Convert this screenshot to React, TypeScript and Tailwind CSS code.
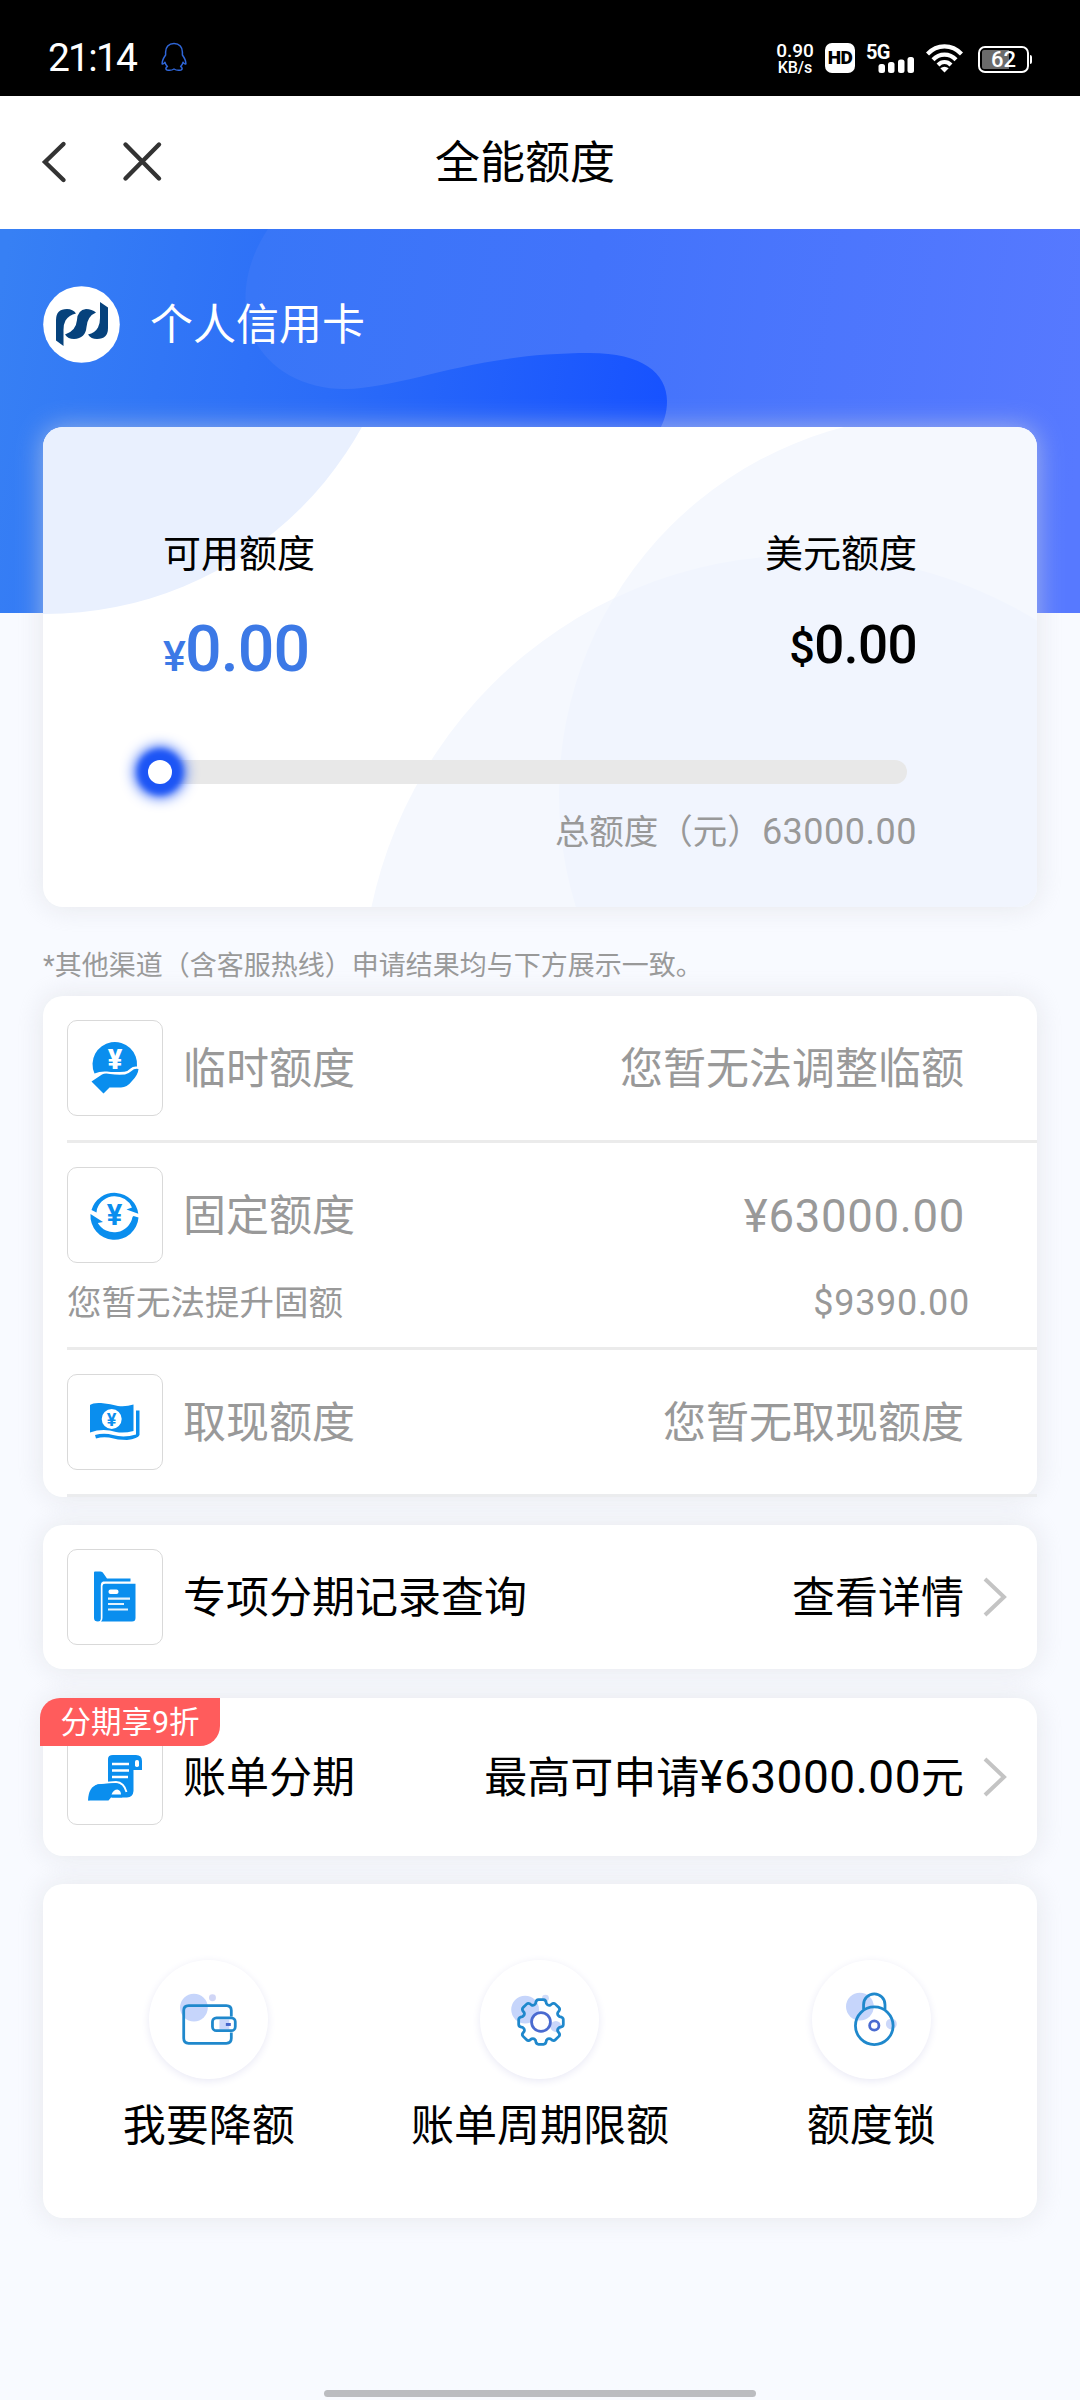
import React from "react";

// Shared chrome
const cardClass = "bg-white rounded-[20px] shadow-[0_0_27px_#d8dade99]";
const BLUE = "#0a8eee";

const App = () => {
  return (
    <div className="w-[1080px] h-[2400px] bg-[#f8faff] flex flex-col overflow-hidden text-black font-['Roboto','Noto_Sans_CJK_SC',sans-serif]">
      <StatusBar />

      {/* Title bar */}
      <header className="h-[133px] shrink-0 bg-white flex items-center relative z-10">
        <svg width="150" height="60" viewBox="0 0 150 60" className="ml-[30px]" fill="none" stroke="#333" strokeWidth="4.4" strokeLinecap="round" strokeLinejoin="miter">
          <path d="M33.5 11 L15 29 L33.5 47" />
          <path d="M95.5 11.5 L129 45.5 M129 11.5 L95.5 45.5" />
        </svg>
        <h1 className="ml-[255px] pt-[3px] text-[45px] leading-[60px]">全能额度</h1>
      </header>

      {/* Blue hero */}
      <section className="h-[384px] shrink-0 relative">
        <HeroBackground />
        <div className="relative flex items-center gap-[30px] pl-[43px] pt-[57px]">
          <BankLogo />
          <span className="text-[43px] leading-[60px] text-white">个人信用卡</span>
        </div>
      </section>

      <main className="px-[43px] -mt-[186px] relative flex flex-col">
        <BalanceCard />

        <p className="mt-[39px] h-[40px] text-[27px] leading-[40px] text-[#999] whitespace-nowrap">
          *其他渠道（含客服热线）申请结果均与下方展示一致。
        </p>

        {/* Limits */}
        <section className={`${cardClass} mt-[10px] h-[501px] pl-6 overflow-visible text-[#999]`}>
          <LimitRow icon={<HandCoinIcon />} label="临时额度" value="您暂无法调整临额" />
          <div className="h-[3px] bg-[#ebebeb]" />
          <div className="h-[204px]">
            <LimitRow icon={<CycleIcon />} label="固定额度" value="¥63000.00" numeric />
            <div className="flex justify-between items-center pr-[67px] -mt-[8px] text-[34.5px] leading-[48px]">
              <span>您暂无法提升固额</span>
              <span className="text-[36px] tracking-[0.7px]">$9390.00</span>
            </div>
          </div>
          <div className="h-[3px] bg-[#ebebeb]" />
          <LimitRow icon={<CashIcon />} label="取现额度" value="您暂无取现额度" />
          <div className="h-[3px] bg-[#ebecee]" />
        </section>

        {/* Instalment records */}
        <section className={`${cardClass} mt-7 h-[144px] pl-6`}>
          <LimitRow icon={<FolderIcon />} label="专项分期记录查询" value="查看详情" arrow />
        </section>

        {/* Bill instalments */}
        <section className={`${cardClass} mt-[29px] h-[158px] pl-6 pt-[7px] relative`}>
          <LimitRow
            icon={<ScrollIcon />}
            label="账单分期"
            value={
              <>
                最高可申请<span className="text-[46px] leading-none tracking-[0.5px]">¥63000.00</span>元
              </>
            }
            arrow
          />
          <span className="absolute -left-[3px] top-0 w-[180px] h-[48px] bg-[#ff5c5c] rounded-tl-[20px] rounded-br-[20px] text-white text-[30.5px] leading-[49px] text-center">
            分期享9折
          </span>
        </section>

        {/* Shortcuts */}
        <section className={`${cardClass} mt-[28px] h-[334px] grid grid-cols-3 pt-[76px]`}>
          <Shortcut icon={<WalletIcon />} label="我要降额" />
          <Shortcut icon={<GearIcon />} label="账单周期限额" />
          <Shortcut icon={<LockIcon />} label="额度锁" />
        </section>
      </main>

      {/* Gesture bar */}
      <div className="mt-auto mb-[3px] mx-auto w-[432px] h-[7px] rounded-full bg-[#bbbcc0]" />
    </div>
  );
};

const StatusBar = () => (
  <div className="h-[96px] shrink-0 bg-black text-white flex items-start pl-[48px] pr-[48px] pt-[42px]">
    <span className="w-[91px] text-[39px] leading-[33px] tracking-[-1.8px]">21:14</span>
    <svg width="26" height="30" viewBox="0 0 26 30" className="ml-[22px]" fill="none" stroke="#2f66d8" strokeWidth="1.5" strokeLinejoin="round">
      <path d="M13 1.5 C7.5 1.5 4.6 5.5 4.6 10 V13 C2.5 16 0.8 19 1.2 22 C2 22.5 3 21.5 4 20.3 C4.4 22 5.2 23.4 6.4 24.5 C4.6 25.4 4.4 27.5 6 28 C8.5 28.6 11.2 28.2 13 27 C14.8 28.2 17.5 28.6 20 28 C21.6 27.5 21.4 25.4 19.6 24.5 C20.8 23.4 21.6 22 22 20.3 C23 21.5 24 22.5 24.8 22 C25.2 19 23.5 16 21.4 13 V10 C21.4 5.5 18.5 1.5 13 1.5Z" />
    </svg>

    <div className="ml-auto flex items-start">
      <div className="w-[38px] text-center font-medium pt-[1px]">
        <div className="text-[19px] leading-[16px]">0.90</div>
        <div className="text-[16px] leading-[18px]">KB/s</div>
      </div>
      <div className="ml-[11px] mt-px w-[30px] h-[30px] rounded-[7px] bg-white text-black text-[19px] leading-[30px] font-black text-center tracking-[-0.5px]">
        HD
      </div>
      <div className="ml-[11px] w-[49px] h-[32px] relative">
        <span className="absolute left-0 top-0 text-[20px] leading-[20px] font-bold tracking-[-0.8px]">5G</span>
        <svg width="49" height="32" viewBox="0 0 49 32" fill="#fff">
          <rect x="12.5" y="22" width="6.5" height="9" rx="2.5" />
          <rect x="22" y="20" width="6.5" height="11" rx="2.5" />
          <rect x="32" y="17.5" width="6.5" height="13.5" rx="2.5" />
          <rect x="41.5" y="15" width="6.5" height="16" rx="2.5" />
        </svg>
      </div>
      <svg width="37" height="30" viewBox="0 0 37 30" className="ml-[11px] mt-[1px]" fill="none" stroke="#fff" strokeWidth="4.2">
        <path d="M1.5 11 C11 0.8 26 0.8 35.5 11" />
        <path d="M7 16.8 C13.5 10 23.5 10 30 16.8" />
        <path d="M12 22 C16 18.2 21 18.2 25 22" />
        <path d="M14.3 25.3 Q18.5 22.2 22.7 25.3 L18.5 29.6Z" fill="#fff" stroke="none" />
      </svg>
      <div className="ml-[15px] mt-[4px] flex items-center">
        <div className="w-[51px] h-[27px] rounded-[7px] border-[2.5px] border-white p-[2px] relative">
          <div className="w-[27px] h-full bg-[#6b6b6b] rounded-l-[2px]" />
          <span className="absolute inset-0 text-[22px] leading-[24px] font-medium text-center">62</span>
        </div>
        <div className="ml-px w-[2px] h-[9px] rounded-r bg-white" />
      </div>
    </div>
  </div>
);

const HeroBackground = () => (
  <svg width="1080" height="384" viewBox="0 0 1080 384" className="absolute inset-0">
    <defs>
      <linearGradient id="heroBase" gradientUnits="userSpaceOnUse" x1="0" y1="60" x2="670" y2="170">
        <stop offset="0" stopColor="#3780f4" />
        <stop offset="0.5" stopColor="#2b6cf8" />
        <stop offset="1" stopColor="#1752ff" />
      </linearGradient>
      <linearGradient id="heroWave" gradientUnits="userSpaceOnUse" x1="245" y1="100" x2="1080" y2="220">
        <stop offset="0" stopColor="#3876f7" />
        <stop offset="0.4" stopColor="#4273fb" />
        <stop offset="1" stopColor="#5779ff" />
      </linearGradient>
    </defs>
    <rect width="1080" height="384" fill="url(#heroBase)" />
    <path d="M268 0 C248 30 244 58 246 80 C250 128 292 160 345 160 C410 158 470 124 590 124 C642 124 667 144 667 172 C667 184 664 192 660 200 L640 384 H1080 V0Z" fill="url(#heroWave)" />
  </svg>
);

const BankLogo = () => (
  <svg width="77" height="77" viewBox="0 0 77 77">
    <circle cx="38.5" cy="38.5" r="38.3" fill="#fff" />
    <g fill="#06427c">
      <path d="M13 34 Q13 23 24 23 Q30 23 33 27.5 Q26 29 22.5 34.5 Q20.5 38 20.5 44 V60 L13 54.5Z" />
      <path d="M53 26.5 Q49 23 43 23 Q34.5 24 34 34 Q33 45 22 48.5 Q25 53 31 53 Q42.5 52.5 43.5 41 Q44.5 30 53 26.5Z" />
      <path d="M65 42 Q65 53 54 53 Q48 53 45 48.5 Q52 47 55 41.5 Q57 38 57 32 V16 L65 21.5Z" />
    </g>
  </svg>
);

const BalanceCard = () => (
  <section className={`${cardClass} h-[480px] relative`}>
    <svg width="994" height="480" viewBox="43 427 994 480" className="absolute inset-0 rounded-[20px]">
      <clipPath id="rightDisc">
        <circle cx="939" cy="795" r="380" />
      </clipPath>
      <circle cx="45" cy="252" r="362" fill="#e9f0fe" />
      <circle cx="939" cy="795" r="380" fill="#f5f8fe" />
      <circle cx="805" cy="998" r="443" fill="#f5f8fe" />
      <circle cx="805" cy="998" r="443" fill="#f1f5fe" clipPath="url(#rightDisc)" />
    </svg>
    <div className="relative pl-[120px] pr-[120px] pt-[99px]">
      <div className="flex justify-between text-[38px] leading-[56px]">
        <span>可用额度</span>
        <span>美元额度</span>
      </div>
      <div className="flex justify-between mt-[31px] h-[72px]">
        <span className="text-[#3c79e6] font-medium leading-[72px] text-[64.5px] tracking-[-0.9px]">
          <span className="text-[43px]">¥</span>0.00
        </span>
        <span className="font-medium leading-[64px] text-[53px] tracking-[-0.6px]">
          <span className="text-[45px]">$</span>0.00
        </span>
      </div>

      {/* Usage slider, sits at zero */}
      <div className="mt-[75px] -ml-1 w-[748px] h-6 rounded-full bg-[#e8e8e8] relative">
        <span className="absolute -left-[11px] top-0 w-6 h-6 rounded-full bg-white shadow-[0_0_14px_13px_#1d55f5,0_0_6px_10px_#1d55f5]" />
      </div>
      <div className="mt-[23px] flex justify-end items-center text-[34.5px] leading-[50px] text-[#999]">
        <span>总额度（元）</span>
        <span className="text-[36px] tracking-[0.5px]">63000.00</span>
      </div>
    </div>
  </section>
);

type RowProps = {
  icon: React.ReactNode;
  label: string;
  value: React.ReactNode;
  numeric?: boolean;
  arrow?: boolean;
};

const LimitRow = ({ icon, label, value, numeric, arrow }: RowProps) => (
  <div className="h-[144px] flex items-center text-[43px] leading-[60px]">
    <div className="w-[96px] h-[96px] shrink-0 rounded-[10px] border border-[#d9d9d9] bg-white">{icon}</div>
    <span className="ml-5 pt-[2px] whitespace-nowrap">{label}</span>
    <span className={numeric ? "ml-auto mr-[72px] pt-[3px] text-[45.5px] tracking-[0.7px]" : "ml-auto mr-[73px] pt-[2px] text-[43px]"}>{value}</span>
    {arrow && (
      <svg width="28" height="44" viewBox="0 0 28 44" className="-ml-[56px] mr-[28px] shrink-0" fill="none" stroke="#c4c4c4" strokeWidth="4">
        <path d="M4 4 L23 22 L4 40" />
      </svg>
    )}
  </div>
);

const Shortcut = ({ icon, label }: { icon: React.ReactNode; label: string }) => (
  <div className="flex flex-col items-center">
    <div className="w-[119px] h-[119px] rounded-full bg-white shadow-[0_2px_8px_#e9e9f5]">{icon}</div>
    <span className="mt-[17px] text-[43px] leading-[60px] whitespace-nowrap">{label}</span>
  </div>
);

// Row icons, drawn on the 96px tile
const Tile = ({ children }: { children: React.ReactNode }) => (
  <svg width="94" height="94" viewBox="1 1 94 94" fill={BLUE}>
    {children}
  </svg>
);

const HandCoinIcon = () => (
  <Tile>
    <path d="M27.5 53.5 A22.3 22.3 0 1 1 70 46.5 Q66 46 63.5 48.5 Q60 52 57 51.8 Q46 52.5 40 51.5 Q33 51 27.5 53.5Z" />
    <path d="M24.5 61.5 L35 54.5 Q38 53 43 54 Q50 55 58 54.5 Q61 54 64.5 51 Q67.5 48 71.5 49 Q71 55 65 61 Q60 67.5 54 67.5 H42.5 L36.5 73.5Z" />
    <text x="48" y="48.5" fontSize="27" fontWeight="900" textAnchor="middle" fill="#fff">¥</text>
  </Tile>
);

const CycleIcon = () => (
  <Tile>
    <path d="M24.5 43 A24 24 0 0 1 71.3 46.8 L59.5 42.5 L65 40.5 A18.8 18.8 0 0 0 30 42 L29.5 45.5Z" />
    <path d="M71.5 50.5 A24 24 0 0 1 23.5 47 L36 55 L30.8 56 A18.8 18.8 0 0 0 65.5 50 L66.5 49Z" />
    <text x="47.5" y="57.5" fontSize="29" fontWeight="700" textAnchor="middle">¥</text>
  </Tile>
);

const CashIcon = () => (
  <Tile>
    <path d="M23 31 Q26 28.5 34 29 Q44 30 51 32 Q59 33 66.5 30.5 V57 Q57 59.5 49 58 Q36 54 23 58.5Z" />
    <path d="M69 36.5 H72.5 V61 Q71 64.5 60 66 Q51 66 42 63.5 Q35 62.5 29 64.5 L28 61 Q37 58.5 46 61 Q57 64 69 60.5Z" />
    <circle cx="44.7" cy="45" r="10" fill="#fff" />
    <text x="44.7" y="51.5" fontSize="18" fontWeight="700" textAnchor="middle">¥</text>
  </Tile>
);

const FolderIcon = () => (
  <Tile>
    <path d="M27 23.5 Q27 22.5 28 22.5 H33.5 Q35.5 22.5 36.5 24.5 L40 29.5 H63.5 V32.5 H36 Q33.8 33 33.8 36 V70 Q33.5 72.5 31 72.5 Q27 72.5 27 69Z" />
    <path d="M35.5 37 Q35.5 34.7 38 34.7 H68.5 V69 Q68.5 72.5 65 72.5 H34 Q35.5 71.5 35.5 69Z" />
    <rect x="41.5" y="40.5" width="10" height="4.5" rx="2" fill="#fff" />
    <path d="M41 49.7 H63 M41 55 H57 M41 60.5 H61" stroke="#e3f2fd" strokeWidth="2.2" />
  </Tile>
);

const ScrollIcon = () => (
  <Tile>
    <path d="M41 53 V30 Q41 26 46 26 H69 Q75 26 75 32 V41 H66.5 V62 Q66 68 60 68.5 H45 L41 60Z" />
    <rect x="68" y="31" width="4" height="7" rx="1.8" fill="#fff" />
    <path d="M45 35 H62 M45 41.5 H62 M45 48 H61" stroke="#fff" strokeWidth="2.4" />
    {/* open hand below the roll */}
    <path d="M21 71.5 Q22 57 31 54.5 L49 53 Q57 53.5 59.5 63" stroke="#fff" strokeWidth="1.8" />
    <path d="M21 71.5 Q21.5 57.5 31 55.2 L49 54 Q56 55.5 57.5 65 L55 68.5 H44 L41.5 71.5Z" />
    <path d="M44.5 65.5 Q46.5 60.5 50.5 60.5 Q54 61.5 54 65.5Z" fill="#fff" />
  </Tile>
);

// Shortcut icons, drawn on the 120px disc
const WalletIcon = () => (
  <svg width="119" height="119" viewBox="0 0 120 120" fill="none" stroke="#1f88cc" strokeWidth="2.8">
    <circle cx="45.3" cy="48" r="14" fill="#c6d5fb" stroke="none" />
    <circle cx="64" cy="38" r="3.5" fill="#d0d6f6" stroke="none" />
    <path d="M83 57 V51 Q83 46 78 46 H40 Q35 46 35 51 V79 Q35 84 40 84 H78 Q83 84 83 79 V73" />
    <rect x="71" y="60" width="10" height="10" fill="#c9d6fa" stroke="none" />
    <rect x="64" y="58.3" width="23" height="13" rx="4" />
    <path d="M77.5 65 H82.5" stroke="#4566cc" strokeWidth="3" />
  </svg>
);

const GearIcon = () => (
  <svg width="119" height="119" viewBox="0 0 120 120" fill="none" stroke="#1f88cc" strokeWidth="2.8" strokeLinejoin="round">
    <circle cx="45.5" cy="50" r="14" fill="#c6d5fb" stroke="none" />
    <circle cx="66" cy="38.5" r="3.5" fill="#d0dcfa" stroke="none" />
    <circle cx="76.5" cy="67" r="5.5" fill="#c9d6fa" stroke="none" />
    <g transform="translate(61.5 62.5)">
      <path d="M-5.5 -18.5 Q-5 -22.5 -2.5 -22.5 H2.5 Q5 -22.5 5.5 -18.5 Q7 -16 9.5 -17 Q12.5 -20 14.5 -18 L18 -14.5 Q20 -12.5 17 -9.5 Q16 -7 18.5 -5.5 Q22.5 -5 22.5 -2.5 V2.5 Q22.5 5 18.5 5.5 Q16 7 17 9.5 Q20 12.5 18 14.5 L14.5 18 Q12.5 20 9.5 17 Q7 16 5.5 18.5 Q5 22.5 2.5 22.5 H-2.5 Q-5 22.5 -5.5 18.5 Q-7 16 -9.5 17 Q-12.5 20 -14.5 18 L-18 14.5 Q-20 12.5 -17 9.5 Q-16 7 -18.5 5.5 Q-22.5 5 -22.5 2.5 V-2.5 Q-22.5 -5 -18.5 -5.5 Q-16 -7 -17 -9.5 Q-20 -12.5 -18 -14.5 L-14.5 -18 Q-12.5 -20 -9.5 -17 Q-7 -16 -5.5 -18.5Z" />
      <circle r="9.5" stroke="#4a6bd0" fill="#fff" />
    </g>
  </svg>
);

const LockIcon = () => (
  <svg width="119" height="119" viewBox="0 0 120 120" fill="none" stroke="#1f88cc" strokeWidth="2.8">
    <circle cx="48.3" cy="47" r="14" fill="#c6d5fb" stroke="none" />
    <circle cx="80" cy="64.5" r="5.5" fill="#ccd8fa" stroke="none" />
    <path d="M52 50 V45 A10.8 10.8 0 0 1 73.6 45 V50" />
    <circle cx="62.8" cy="66.3" r="19" />
    <circle cx="62.8" cy="66" r="4.7" stroke="#4a6bd0" />
  </svg>
);

export default App;
